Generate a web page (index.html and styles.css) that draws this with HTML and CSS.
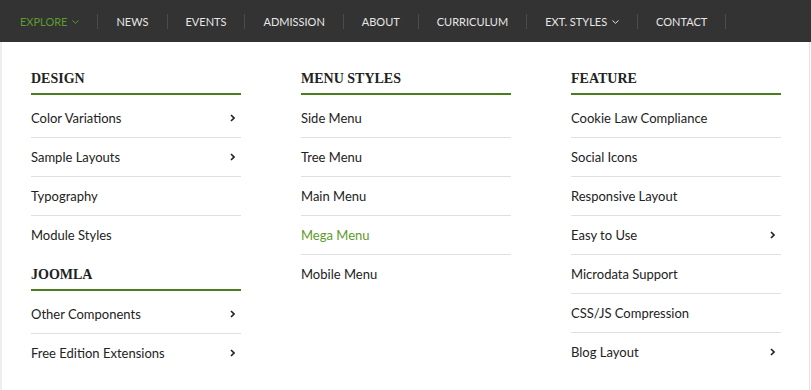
FILE: index.html
```html
<!DOCTYPE html>
<html lang="en">
<head>
  <meta charset="UTF-8" />
  <title>Mega Menu</title>
  <link rel="stylesheet" href="styles.css">
</head>
<body>
  <nav class="topbar">
    <ul class="nav">
      <li class="nav-item active">Explore <svg class="caret" width="7" height="4" viewBox="0 0 7 4"><path d="M0.5 0.5 L3.5 3.3 L6.5 0.5" fill="none" stroke="currentColor" stroke-width="1"/></svg></li>
      <li class="nav-item">News</li>
      <li class="nav-item">Events</li>
      <li class="nav-item">Admission</li>
      <li class="nav-item">About</li>
      <li class="nav-item">Curriculum</li>
      <li class="nav-item">Ext. Styles <svg class="caret" width="7" height="4" viewBox="0 0 7 4"><path d="M0.5 0.5 L3.5 3.3 L6.5 0.5" fill="none" stroke="currentColor" stroke-width="1"/></svg></li>
      <li class="nav-item">Contact</li>
    </ul>
  </nav>

  <div class="mega">
    <div class="mega-col">
      <h3 class="mega-title">Design</h3>
      <ul class="mega-list">
        <li>Color Variations <svg class="arrow" width="5" height="8" viewBox="0 0 5 8"><path d="M1 1 L4 4 L1 7" fill="none" stroke="currentColor" stroke-width="1.6"/></svg></li>
        <li>Sample Layouts <svg class="arrow" width="5" height="8" viewBox="0 0 5 8"><path d="M1 1 L4 4 L1 7" fill="none" stroke="currentColor" stroke-width="1.6"/></svg></li>
        <li>Typography</li>
        <li>Module Styles</li>
      </ul>
      <h3 class="mega-title next">Joomla</h3>
      <ul class="mega-list">
        <li>Other Components <svg class="arrow" width="5" height="8" viewBox="0 0 5 8"><path d="M1 1 L4 4 L1 7" fill="none" stroke="currentColor" stroke-width="1.6"/></svg></li>
        <li>Free Edition Extensions <svg class="arrow" width="5" height="8" viewBox="0 0 5 8"><path d="M1 1 L4 4 L1 7" fill="none" stroke="currentColor" stroke-width="1.6"/></svg></li>
      </ul>
    </div>

    <div class="mega-col">
      <h3 class="mega-title">Menu Styles</h3>
      <ul class="mega-list">
        <li>Side Menu</li>
        <li>Tree Menu</li>
        <li>Main Menu</li>
        <li class="current">Mega Menu</li>
        <li>Mobile Menu</li>
      </ul>
    </div>

    <div class="mega-col">
      <h3 class="mega-title">Feature</h3>
      <ul class="mega-list">
        <li>Cookie Law Compliance</li>
        <li>Social Icons</li>
        <li>Responsive Layout</li>
        <li>Easy to Use <svg class="arrow" width="5" height="8" viewBox="0 0 5 8"><path d="M1 1 L4 4 L1 7" fill="none" stroke="currentColor" stroke-width="1.6"/></svg></li>
        <li>Microdata Support</li>
        <li>CSS/JS Compression</li>
        <li>Blog Layout <svg class="arrow" width="5" height="8" viewBox="0 0 5 8"><path d="M1 1 L4 4 L1 7" fill="none" stroke="currentColor" stroke-width="1.6"/></svg></li>
      </ul>
    </div>
  </div>
</body>
</html>
```

FILE: styles.css
```css
/* Base */
* {
  box-sizing: border-box;
}
body {
  margin: 0;
  background: #fff;
  font-family: Lato, "Open Sans", sans-serif;
  color: #222;
}
ul {
  list-style: none;
  margin: 0;
  padding: 0;
}

/* Top navigation */
.topbar {
  background: #333;
  height: 42px;
}
.nav {
  display: flex;
  align-items: center;
  height: 42px;
  padding-left: 2px;
}
.nav-item {
  display: flex;
  align-items: center;
  gap: 5px;
  padding: 0 18px;
  height: 15px;
  border-right: 1px solid #4b4b4b;
  font-size: 11px;
  text-transform: uppercase;
  color: #e6e6e6;
  line-height: 15px;
}
.nav-item.active {
  color: #5e9a2e;
}
.caret {
  display: block;
  margin-top: 1px;
}

/* Mega dropdown */
.mega {
  width: 810px;
  display: grid;
  grid-template-columns: 210px 210px 210px;
  column-gap: 60px;
  padding: 27px 0 40px 29px;
  border-left: 2px solid #eee;
  border-right: 1px solid #e2e2e2;
}
.mega-title {
  margin: 0;
  font-family: "Liberation Serif", "Times New Roman", serif;
  font-size: 14px;
  font-weight: 700;
  text-transform: uppercase;
  line-height: 20px;
  padding-bottom: 4px;
  border-bottom: 2px solid #4b7d1e;
  color: #222;
}
.mega-title.next {
  margin-top: 11px;
}
.mega-list {
  margin-top: 4px;
}
.mega-list li {
  display: flex;
  align-items: center;
  justify-content: space-between;
  padding: 9px 6px 9px 0;
  font-size: 13px;
  line-height: 20px;
  border-bottom: 1px solid #e0e0e0;
}
.mega-list li:last-child {
  border-bottom: none;
}
.mega-list li.current {
  color: #5e9a2e;
}
.arrow {
  display: block;
  color: #222;
}
```
